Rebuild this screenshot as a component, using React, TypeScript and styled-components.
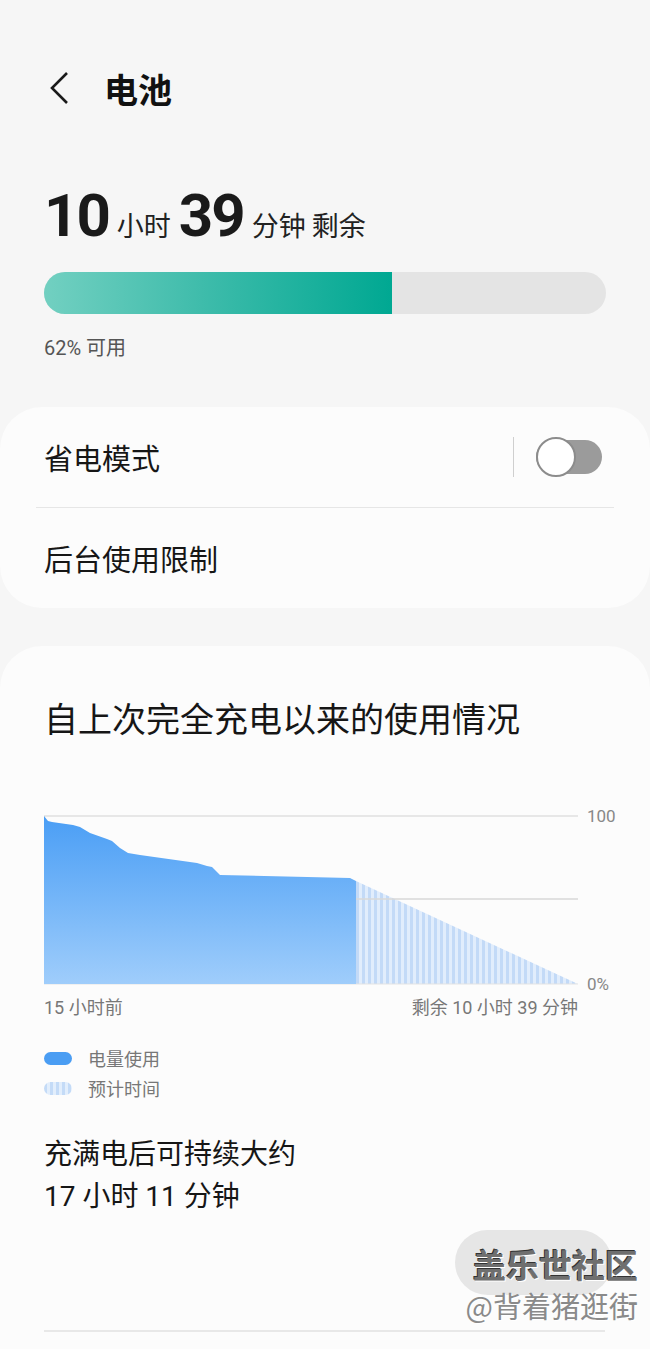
import styled, { createGlobalStyle } from 'styled-components';

const GlobalStyle = createGlobalStyle`
  html, body {
    margin: 0;
    padding: 0;
    background: #f6f6f6;
  }
  body {
    width: 650px;
    font-family: Roboto, 'Noto Sans CJK SC', sans-serif;
    color: #111;
  }
`;

const Page = styled.div`
  position: relative;
  width: 650px;
  height: 1349px;
  overflow: hidden;
  background: #f6f6f6;
`;

const Header = styled.header`
  display: flex;
  align-items: center;
  gap: 30px;
  height: 56px;
  padding: 60px 0 0 44px;
`;

const BackButton = styled.button`
  display: flex;
  align-items: center;
  justify-content: center;
  width: 30px;
  height: 40px;
  padding: 0;
  border: none;
  background: none;
`;

const Title = styled.h1`
  margin: 0;
  font-family: 'Noto Sans CJK SC', sans-serif;
  font-size: 34px;
  font-weight: 700;
`;

const Summary = styled.section`
  padding: 64px 44px 0;
`;

const Remaining = styled.div`
  display: flex;
  align-items: baseline;
  gap: 8px;
  height: 60px;
`;

const BigNum = styled.span`
  font-family: Roboto, sans-serif;
  font-size: 60px;
  font-weight: 700;
  letter-spacing: -2px;
  color: #1a1a1a;
`;

const Unit = styled.span`
  font-family: 'Noto Sans CJK SC', sans-serif;
  font-size: 27px;
  color: #222;
`;

const Bar = styled.div`
  height: 42px;
  margin-top: 32px;
  border-radius: 21px;
  background: #e4e4e4;
  overflow: hidden;
`;

const BarFill = styled.div`
  height: 100%;
  background: linear-gradient(90deg, #72d0c1 0%, #3fbcab 45%, #00a892 100%);
`;

const Caption = styled.div`
  margin-top: 18px;
  font-family: Roboto, 'Noto Sans CJK SC', sans-serif;
  font-size: 20px;
  color: #555;
`;

const Card = styled.section<{ $top: number }>`
  margin-top: ${(p) => p.$top}px;
  background: #fcfcfc;
  border-radius: 42px;
`;

const Row = styled.div`
  display: flex;
  align-items: center;
  height: 100px;
  padding: 0 48px 0 44px;
  font-family: 'Noto Sans CJK SC', sans-serif;
  font-size: 29px;
  color: #161616;
`;

const RowLabel = styled.span`
  flex: 1;
`;

const Divider = styled.div`
  height: 1px;
  margin: 0 36px;
  background: #e6e6e6;
`;

const VLine = styled.div`
  width: 1px;
  height: 40px;
  margin-right: 22px;
  background: #cfcfcf;
`;

const Toggle = styled.div`
  display: flex;
  align-items: center;
  width: 66px;
  height: 40px;
`;

const Track = styled.div`
  position: relative;
  width: 66px;
  height: 34px;
  border-radius: 17px;
  background: #9b9b9b;
`;

const Knob = styled.div`
  position: absolute;
  left: 0;
  top: -3px;
  width: 36px;
  height: 36px;
  border: 2px solid #8c8c8c;
  border-radius: 50%;
  background: #fff;
`;

const UsageCard = styled(Card)`
  padding: 46px 0 0;
  min-height: 720px;
`;

const UsageTitle = styled.h2`
  margin: 0 0 0 44px;
  font-family: 'Noto Sans CJK SC', sans-serif;
  font-size: 34px;
  font-weight: 400;
  line-height: 51px;
  color: #161616;
`;

const ChartWrap = styled.div`
  margin: 63px 0 0 44px;
  width: 580px;
  svg {
    display: block;
  }
`;

const TimeRow = styled.div`
  display: flex;
  justify-content: space-between;
  width: 534px;
  font-family: Roboto, 'Noto Sans CJK SC', sans-serif;
  font-size: 18px;
  line-height: 24px;
  color: #777;
`;

const Legend = styled.div`
  display: flex;
  flex-direction: column;
  gap: 6px;
  margin: 26px 0 0 44px;
`;

const LegendItem = styled.div`
  display: flex;
  align-items: center;
  gap: 16px;
  height: 24px;
  font-family: 'Noto Sans CJK SC', sans-serif;
  font-size: 18px;
  color: #777;
`;

const Swatch = styled.span<{ $hatched?: boolean }>`
  width: 28px;
  height: 13px;
  border-radius: 7px;
  background: ${(p) =>
    p.$hatched
      ? 'repeating-linear-gradient(90deg, #c4dbf7 0 3px, #e2eefc 3px 6px)'
      : '#4a9df3'};
`;

const FullCharge = styled.div`
  margin: 34px 0 0 44px;
  font-family: Roboto, 'Noto Sans CJK SC', sans-serif;
  font-size: 28px;
  line-height: 42px;
  color: #161616;
`;

const Footer = styled.div`
  display: flex;
  justify-content: flex-end;
  padding: 12px 38px 0 0;
`;

const DetailButton = styled.button`
  width: 157px;
  height: 65px;
  border: none;
  border-radius: 33px;
  background: #e6e6e6;
`;

const BottomLine = styled.div`
  height: 2px;
  margin: 35px 45px 0 44px;
  background: #e8e8e8;
`;

const Watermark = styled.div`
  position: absolute;
  right: 12px;
  top: 1245px;
  display: flex;
  flex-direction: column;
  align-items: flex-end;
  gap: 5px;
  font-family: 'Noto Sans CJK SC', sans-serif;
  pointer-events: none;
`;

const WmMain = styled.span`
  font-size: 33px;
  font-weight: 700;
  line-height: 38px;
  color: #6f6f6f;
  text-shadow: 1px 1px 0 #fff, -1px -1px 0 #333;
`;

const WmSub = styled.span`
  font-size: 29px;
  line-height: 34px;
  color: #8a8a8a;
  text-shadow: 1px 1px 0 #fff;
`;

const usagePath =
  'M0,10 L4,15 L8,16 L29,19 L36,21 L46,27 L63,33 L68,35 L76,42 L84,47 L96,49 L153,57 L163,60 L168,61 L176,69 L306,72 L312,75 L312,178 L0,178 Z';

function UsageChart() {
  return (
    <svg width='580' height='190' viewBox='0 0 580 190'>
      <defs>
        <linearGradient id='usageFill' x1='0' y1='0' x2='0' y2='1'>
          <stop offset='0%' stopColor='#4a9ef5' />
          <stop offset='100%' stopColor='#9fcdfb' />
        </linearGradient>
        <pattern id='hatch' width='6' height='10' patternUnits='userSpaceOnUse'>
          <rect width='3' height='10' fill='#c3daf7' />
          <rect x='3' width='3' height='10' fill='#e1edfc' />
        </pattern>
      </defs>
      <line x1='0' y1='10' x2='534' y2='10' stroke='#e0e0e0' strokeWidth='1.5' />
      <path d='M312,75 L534,178 L312,178 Z' fill='url(#hatch)' />
      <line x1='0' y1='93' x2='534' y2='93' stroke='#d8d8d8' strokeWidth='1.5' />
      <line x1='0' y1='178' x2='534' y2='178' stroke='#e3e3e3' strokeWidth='1' />
      <path d={usagePath} fill='url(#usageFill)' />
      <text x='543' y='16' fontFamily='Roboto, sans-serif' fontSize='17' fill='#888'>
        100
      </text>
      <text x='543' y='184' fontFamily='Roboto, sans-serif' fontSize='17' fill='#888'>
        0%
      </text>
    </svg>
  );
}

export default function App() {
  const percent = 62;
  return (
    <Page>
      <GlobalStyle />
      <Header>
        <BackButton type='button' title='返回'>
          <svg width='22' height='34' viewBox='0 0 22 34'>
            <path d='M19 2 L4 17 L19 32' fill='none' stroke='#1a1a1a' strokeWidth='2.6' />
          </svg>
        </BackButton>
        <Title>电池</Title>
      </Header>
      <Summary>
        <Remaining>
          <BigNum>10</BigNum>
          <Unit>小时</Unit>
          <BigNum>39</BigNum>
          <Unit>分钟 剩余</Unit>
        </Remaining>
        <Bar>
          <BarFill style={{ width: `${percent}%` }} />
        </Bar>
        <Caption>{percent}% 可用</Caption>
      </Summary>
      <Card $top={46}>
        <Row>
          <RowLabel>省电模式</RowLabel>
          <VLine />
          <Toggle>
            <Track>
              <Knob />
            </Track>
          </Toggle>
        </Row>
        <Divider />
        <Row>
          <RowLabel>后台使用限制</RowLabel>
        </Row>
      </Card>
      <UsageCard $top={38}>
        <UsageTitle>自上次完全充电以来的使用情况</UsageTitle>
        <ChartWrap>
          <UsageChart />
          <TimeRow>
            <span>15 小时前</span>
            <span>剩余 10 小时 39 分钟</span>
          </TimeRow>
        </ChartWrap>
        <Legend>
          <LegendItem>
            <Swatch />
            电量使用
          </LegendItem>
          <LegendItem>
            <Swatch $hatched />
            预计时间
          </LegendItem>
        </Legend>
        <FullCharge>
          充满电后可持续大约
          <br />
          17 小时 11 分钟
        </FullCharge>
        <Footer>
          <DetailButton type='button' />
        </Footer>
        <BottomLine />
      </UsageCard>
      <Watermark>
        <WmMain>盖乐世社区</WmMain>
        <WmSub>@背着猪逛街</WmSub>
      </Watermark>
    </Page>
  );
}
